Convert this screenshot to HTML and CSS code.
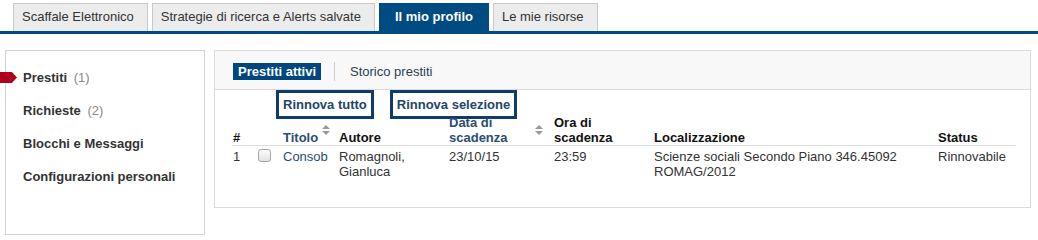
FILE: index.html
```html
<!DOCTYPE html>
<html lang="it">
<head>
<meta charset="utf-8">
<title>Il mio profilo</title>
<link rel="stylesheet" href="styles.css">
</head>
<body>
<nav class="tabs">
  <a class="tab">Scaffale Elettronico</a>
  <a class="tab">Strategie di ricerca e Alerts salvate</a>
  <a class="tab active">Il mio profilo</a>
  <a class="tab">Le mie risorse</a>
</nav>
<div class="main">
  <aside class="side">
    <ul class="menu">
      <li class="item current"><span class="marker"></span>Prestiti <span class="count">(1)</span></li>
      <li class="item">Richieste <span class="count">(2)</span></li>
      <li class="item">Blocchi e Messaggi</li>
      <li class="item">Configurazioni personali</li>
    </ul>
  </aside>
  <section class="panel">
    <div class="panel-head">
      <span class="subtab on">Prestiti attivi</span>
      <span class="sep"></span>
      <span class="subtab">Storico prestiti</span>
    </div>
    <div class="actions">
      <button class="btn">Rinnova tutto</button>
      <button class="btn">Rinnova selezione</button>
    </div>
    <table class="loans">
      <colgroup>
        <col class="c-num"><col class="c-cb"><col class="c-tit"><col class="c-aut"><col class="c-data"><col class="c-ora"><col class="c-loc"><col class="c-st">
      </colgroup>
      <thead>
        <tr>
          <th>#</th>
          <th></th>
          <th class="sortable link">Titolo<span class="sort"><svg width="8" height="10" viewBox="0 0 8 10"><path d="M4 0 L8 4 L0 4 Z M0 6 L8 6 L4 10 Z" fill="#9a9a9a"/></svg></span></th>
          <th>Autore</th>
          <th class="sortable link">Data di<br>scadenza<span class="sort"><svg width="8" height="10" viewBox="0 0 8 10"><path d="M4 0 L8 4 L0 4 Z M0 6 L8 6 L4 10 Z" fill="#9a9a9a"/></svg></span></th>
          <th>Ora di<br>scadenza</th>
          <th>Localizzazione</th>
          <th>Status</th>
        </tr>
      </thead>
      <tbody>
        <tr>
          <td>1</td>
          <td><span class="cb"></span></td>
          <td class="link">Consob</td>
          <td>Romagnoli,<br>Gianluca</td>
          <td>23/10/15</td>
          <td>23:59</td>
          <td>Scienze sociali Secondo Piano 346.45092<br>ROMAG/2012</td>
          <td>Rinnovabile</td>
        </tr>
      </tbody>
    </table>
  </section>
</div>
</body>
</html>
```
FILE: styles.css
```css
* { box-sizing: border-box; }
body {
  margin: 0;
  background: #fff;
  font-family: "Liberation Sans", Arial, sans-serif;
  font-size: 13px;
  color: #333;
}
.tabs {
  display: flex;
  gap: 4px;
  padding: 3px 0 0 13px;
  border-bottom: 3px solid #004b81;
}
.tab {
  display: block;
  height: 28px;
  line-height: 26px;
  padding: 0 13px 0 8px;
  background: #ececec;
  border: 1px solid #c9c9c9;
  border-bottom: none;
  color: #333;
}
.tab.active {
  background: #004b81;
  border-color: #004b81;
  color: #fff;
  font-weight: bold;
  padding: 0 15px;
}
.main {
  display: flex;
  gap: 9px;
  padding: 16px 0 0 5px;
}
.side {
  width: 200px;
  height: 185px;
  border: 1px solid #d4d4d4;
}
.menu {
  list-style: none;
  margin: 0;
  padding: 10px 0 0 0;
}
.item {
  position: relative;
  padding-left: 17px;
  line-height: 33px;
  height: 33px;
  font-weight: bold;
  color: #333;
}
.count {
  font-weight: normal;
  color: #888;
  margin-left: 3px;
}
.marker {
  position: absolute;
  left: -6px;
  top: 11px;
  width: 17px;
  height: 11px;
  background: #b00020;
  clip-path: polygon(0 0, 70% 0, 100% 50%, 70% 100%, 0 100%);
}
.panel {
  width: 817px;
  height: 158px;
  border: 1px solid #dcdcdc;
}
.panel-head {
  display: flex;
  align-items: center;
  height: 39px;
  padding: 3px 0 0 18px;
  background: #f8f8f8;
  border-bottom: 1px solid #dcdcdc;
}
.subtab {
  line-height: 17px;
  padding: 0 5px;
  color: #2b3f57;
}
.subtab.on {
  background: #00467f;
  color: #fff;
  font-weight: bold;
}
.sep {
  width: 1px;
  height: 19px;
  background: #cfcfcf;
  margin: 0 10px 0 13px;
}
.actions {
  display: flex;
  gap: 16px;
  padding-left: 61px;
  margin-bottom: -4px;
}
.btn {
  height: 29px;
  padding: 0 4px;
  border: 3px solid #0e3d6b;
  background: #fff;
  font-family: inherit;
  font-size: 13px;
  font-weight: bold;
  color: #22456b;
}
.loans {
  margin-left: 17px;
  width: 784px;
  table-layout: fixed;
  border-collapse: collapse;
}
.c-num { width: 25px; }
.c-cb { width: 25px; }
.c-tit { width: 56px; }
.c-aut { width: 110px; }
.c-data { width: 105px; }
.c-ora { width: 100px; }
.c-loc { width: 284px; }
.c-st { width: 79px; }
th {
  position: relative;
  text-align: left;
  vertical-align: bottom;
  font-weight: bold;
  color: #111;
  line-height: 15px;
  padding: 0 0 0 1px;
  border-bottom: 1px solid #dedede;
}
th.link { color: #2b4d72; }
td {
  vertical-align: top;
  line-height: 15px;
  padding: 3px 0 0 1px;
  color: #333;
}
td.link { color: #2b4d72; }
.sort {
  position: absolute;
  right: 8px;
  top: 10px;
  line-height: 0;
}
.loans th:nth-child(5) .sort { right: 10px; }
.cb {
  display: inline-block;
  width: 13px;
  height: 13px;
  border: 1px solid #a6a6a6;
  border-radius: 3px;
  background: linear-gradient(#fdfdfd, #e2e2e2);
}
```
